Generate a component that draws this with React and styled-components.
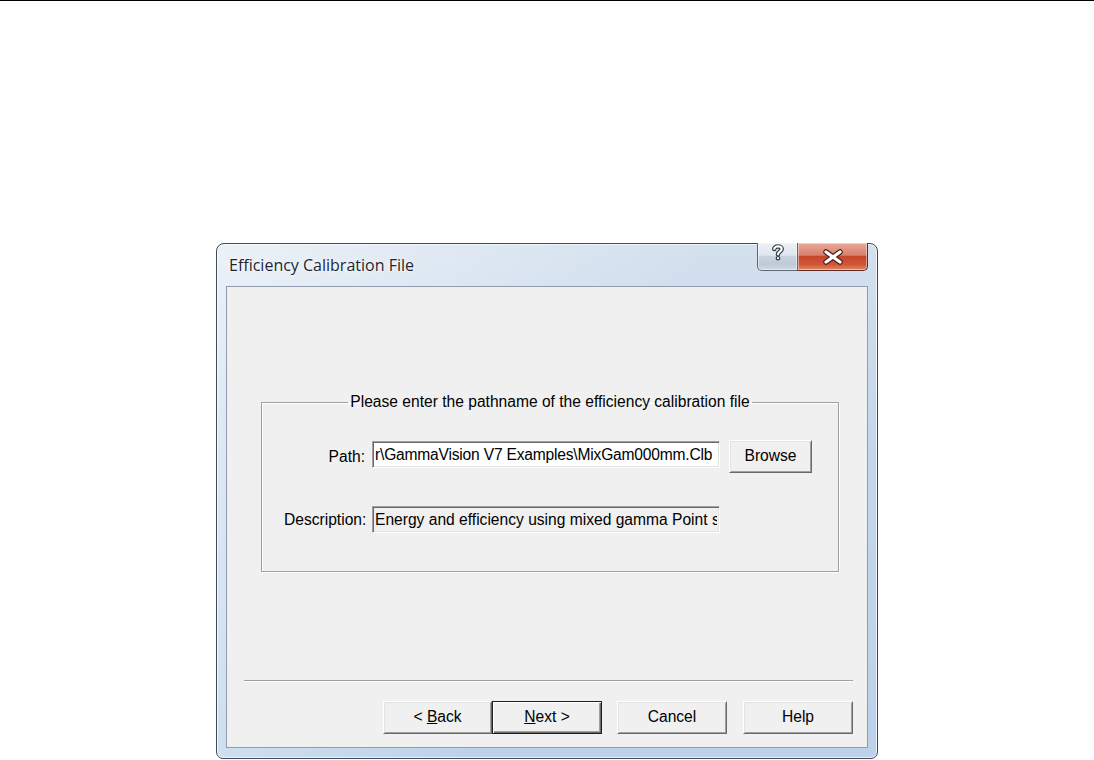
import React from "react";
import styled, { createGlobalStyle } from "styled-components";

const GlobalStyle = createGlobalStyle`
  html, body { margin: 0; padding: 0; background: #ffffff; }
  body { font-family: "Liberation Sans", Arial, sans-serif; }
  * { box-sizing: border-box; }
`;

const Page = styled.div`
  min-height: 760px;
  border-top: 1px solid #000;
  display: flex;
  flex-direction: column;
  align-items: center;
  padding-top: 242px;
`;

const Window = styled.div`
  width: 662px;
  height: 516px;
  border: 1px solid #3f4a57;
  border-radius: 8px 8px 7px 7px;
  background:
    linear-gradient(115deg, rgba(255,255,255,0.55) 0%, rgba(255,255,255,0.25) 30%, rgba(255,255,255,0) 55%),
    linear-gradient(180deg, #d3e0ee 0%, #c4d6ea 40%, #bcd2ea 100%);
  box-shadow: inset 0 0 0 1px rgba(255,255,255,0.7);
  display: flex;
  flex-direction: column;
  padding: 0 9px 10px 9px;
`;

const TitleBar = styled.div`
  height: 42px;
  display: flex;
  justify-content: space-between;
  align-items: flex-start;
`;

const TitleText = styled.div`
  padding: 11px 0 0 3px;
  font-family: "Open Sans", "Noto Sans", sans-serif;
  font-size: 16px;
  line-height: 20px;
  color: #1b2533;
  text-shadow: 0 0 6px rgba(255,255,255,0.9), 0 0 2px rgba(255,255,255,0.9);
`;

const CaptionGroup = styled.div`
  display: flex;
  margin-top: -1px;
`;

const CaptionButton = styled.div`
  width: ${(p) => p.$w}px;
  height: 28px;
  display: flex;
  align-items: flex-start;
  justify-content: center;
  padding-top: ${(p) => p.$iconTop}px;
  border: 1px solid ${(p) => (p.$close ? "#5a2a24" : "#5d6877")};
  border-top: none;
  border-radius: ${(p) => (p.$close ? "0 0 5px 0" : "0 0 0 5px")};
  border-left: ${(p) => (p.$close ? "none" : undefined)};
  background: ${(p) =>
    p.$close
      ? "linear-gradient(180deg, #e9a99b 0%, #d8806c 45%, #c7452d 50%, #d15636 80%, #e08a63 100%)"
      : "linear-gradient(180deg, #eef2f7 0%, #dfe6ee 45%, #c9d3de 50%, #bfcad6 80%, #cfdae6 100%)"};
  box-shadow: inset 0 0 0 1px rgba(255,255,255,0.45);
`;

const Client = styled.div`
  flex: 1;
  background: #f0f0f0;
  border: 1px solid #8e9cae;
  display: flex;
  flex-direction: column;
  padding: 0 14px 13px 0;
`;

const GroupBox = styled.fieldset`
  margin: 106px 14px 0 34px;
  padding: 0 0 38px 0;
  border: 1px solid #a0a0a0;
  box-shadow: 1px 1px 0 #ffffff, inset 1px 1px 0 #ffffff;
  min-width: 0;
`;

const Legend = styled.legend`
  margin: 0 auto;
  padding: 0 2px;
  font-size: 15.6px;
  line-height: 18px;
  color: #000;
`;

const FieldGrid = styled.div`
  margin: 29px 0 0 22px;
  display: grid;
  grid-template-columns: 81px 348px 83px;
  column-gap: 7px;
  row-gap: 33px;
  align-items: center;
  grid-template-rows: 33px 27px;
`;

const Label = styled.label`
  font-size: 15.6px;
  color: #000;
  text-align: right;
  white-space: nowrap;
`;

const TextField = styled.input`
  height: 27px;
  width: 348px;
  margin-top: ${(p) => (p.$lift ? "-4px" : "0")};
  padding: 0 2px;
  border: 1px solid;
  border-color: #a0a0a0 #ffffff #ffffff #a0a0a0;
  box-shadow: inset 1px 1px 0 #696969, inset -1px -1px 0 #e3e3e3;
  background: ${(p) => (p.$readonly ? "#f0f0f0" : "#ffffff")};
  font-family: "Liberation Sans", Arial, sans-serif;
  font-size: 15.6px;
  letter-spacing: ${(p) => (p.$tight ? "-0.2px" : "0")};
  color: #000;
  outline: none;
`;

const Button = styled.button`
  width: ${(p) => p.$w}px;
  height: 33px;
  margin-left: ${(p) => p.$gap || 0}px;
  padding: 0 0 2px 0;
  background: #f0f0f0;
  border: 1px solid;
  border-color: ${(p) => (p.$default ? "#1e1e1e" : "#ffffff #696969 #696969 #ffffff")};
  box-shadow: ${(p) =>
    p.$default
      ? "inset 1px 1px 0 #ffffff, inset -1px -1px 0 #696969, inset -2px -2px 0 #a0a0a0"
      : "inset 1px 1px 0 #e3e3e3, inset -1px -1px 0 #a0a0a0"};
  font-family: "Liberation Sans", Arial, sans-serif;
  font-size: 15.6px;
  color: #000;
  display: flex;
  align-items: center;
  justify-content: center;
`;

const BrowseButton = styled(Button)`
  margin-left: 2px;
`;

const Spacer = styled.div`
  flex: 1;
`;

const Separator = styled.div`
  height: 2px;
  margin: 0 0 19px 17px;
  border-top: 1px solid #a0a0a0;
  border-bottom: 1px solid #ffffff;
`;

const ButtonRow = styled.div`
  display: flex;
  justify-content: flex-end;
`;

const HelpIcon = () => (
  <svg width="14" height="17" viewBox="0 0 14 17">
    <path d="M3.3 5 C3.3 1.6 10.7 1.6 10.7 5 C10.7 7.6 7 7.6 7 10.3" fill="none" stroke="#323b48" strokeWidth="4.6" strokeLinecap="round" />
    <path d="M3.3 5 C3.3 1.6 10.7 1.6 10.7 5 C10.7 7.6 7 7.6 7 10.3" fill="none" stroke="#ffffff" strokeWidth="2.2" strokeLinecap="round" />
    <circle cx="7" cy="14.2" r="2.3" fill="#323b48" />
    <circle cx="7" cy="14.2" r="1.1" fill="#ffffff" />
  </svg>
);

const CloseIcon = () => (
  <svg width="24" height="16" viewBox="0 0 24 16">
    <path d="M5 3 L19 13 M19 3 L5 13" stroke="#4a1d16" strokeWidth="5.5" strokeLinecap="round" />
    <path d="M5 3 L19 13 M19 3 L5 13" stroke="#ffffff" strokeWidth="3.2" strokeLinecap="round" />
  </svg>
);

export default function App() {
  return (
    <>
      <GlobalStyle />
      <Page>
        <Window>
          <TitleBar>
            <TitleText>Efficiency Calibration File</TitleText>
            <CaptionGroup>
              <CaptionButton $w={41} $iconTop={1}>
                <HelpIcon />
              </CaptionButton>
              <CaptionButton $w={70} $close $iconTop={6}>
                <CloseIcon />
              </CaptionButton>
            </CaptionGroup>
          </TitleBar>
          <Client>
            <GroupBox>
              <Legend>Please enter the pathname of the efficiency calibration file</Legend>
              <FieldGrid>
                <Label>Path:</Label>
                <TextField $lift $tight readOnly value="r\GammaVision V7 Examples\MixGam000mm.Clb" />
                <BrowseButton $w={83}>Browse</BrowseButton>
                <Label>Description:</Label>
                <TextField $readonly readOnly value="Energy and efficiency using mixed gamma Point source" />
              </FieldGrid>
            </GroupBox>
            <Spacer />
            <Separator />
            <ButtonRow>
              <Button $w={109}>
                &lt;&nbsp;<u>B</u>ack
              </Button>
              <Button $w={110} $default>
                <u>N</u>ext &gt;
              </Button>
              <Button $w={110} $gap={15}>Cancel</Button>
              <Button $w={110} $gap={16}>Help</Button>
            </ButtonRow>
          </Client>
        </Window>
      </Page>
    </>
  );
}
